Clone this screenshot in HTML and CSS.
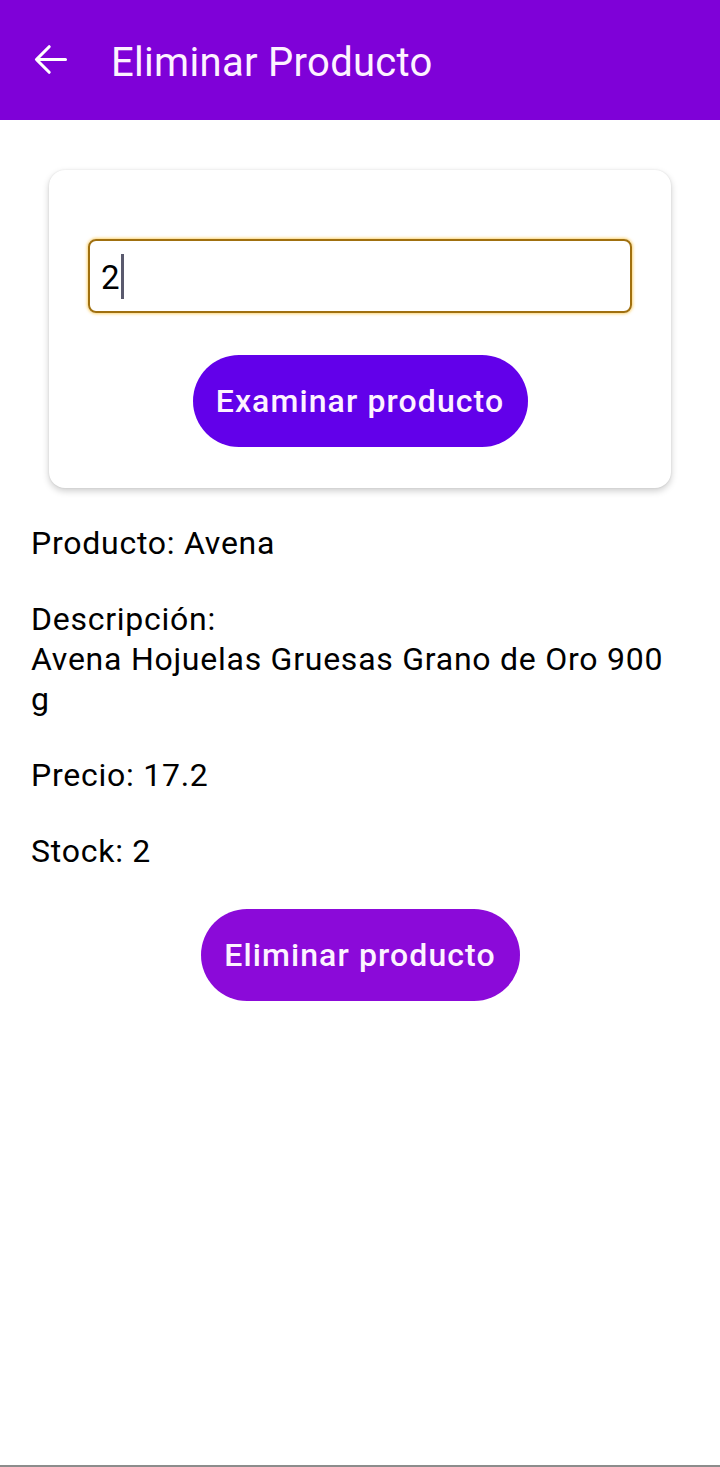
FILE: index.html
```html
<!DOCTYPE html>
<html lang="es">
<head>
<meta charset="utf-8">
<title>Eliminar Producto</title>
<link rel="stylesheet" href="styles.css">
</head>
<body>
<div class="screen">
  <header class="appbar">
    <svg class="back" width="45" height="45" viewBox="0 0 24 24"><path d="M20 12H4.6M11.3 5.2L4.5 12l6.8 6.8" fill="none" stroke="#fff" stroke-width="1.65" stroke-linecap="round" stroke-linejoin="round"/></svg>
    <h1 class="title">Eliminar Producto</h1>
  </header>
  <main class="content">
    <section class="card">
      <div class="field"><span class="value">2</span><span class="caret"></span></div>
      <button class="btn btn-examine">Examinar producto</button>
    </section>
    <div class="info">
      <p class="line">Producto: Avena</p>
      <p class="line">Descripción:<br>Avena Hojuelas Gruesas Grano de Oro 900 g</p>
      <p class="line">Precio: 17.2</p>
      <p class="line">Stock: 2</p>
    </div>
    <div class="actions">
      <button class="btn btn-delete">Eliminar producto</button>
    </div>
  </main>
</div>
</body>
</html>
```
FILE: styles.css
```css
* { box-sizing: border-box; }
html, body { margin: 0; padding: 0; background: #fff; }
body { font-family: Roboto, "Noto Sans", sans-serif; color: #000; }
.screen {
  width: 720px;
  height: 1467px;
  display: flex;
  flex-direction: column;
  border-bottom: 2px solid #8c8c8c;
  overflow: hidden;
}
.appbar {
  height: 120px;
  background: #7f01d8;
  display: flex;
  align-items: center;
  padding-left: 28px;
  flex-shrink: 0;
}
.back { display: block; margin-right: 38px; margin-bottom: 2px; }
.title {
  margin: 4px 0 0 0;
  color: #fdf2ff;
  font-weight: 400;
  font-size: 40px;
  letter-spacing: 0.3px;
}
.content { flex: 1; }
.card {
  margin: 50px 49px 0 49px;
  background: #fff;
  border-radius: 16px;
  box-shadow: 0 3px 7px rgba(0,0,0,0.2), 0 0 2px rgba(0,0,0,0.1);
  padding: 69px 39px 41px 39px;
  display: flex;
  flex-direction: column;
  align-items: center;
}
.field {
  width: 100%;
  height: 74px;
  border: 2px solid #a0700f;
  border-radius: 8px;
  box-shadow: 0 0 3px 1px rgba(250, 196, 70, 0.75);
  display: flex;
  align-items: center;
  padding: 3px 0 0 11px;
  font-size: 33px;
}
.value { line-height: 1; }
.caret {
  width: 3px;
  height: 45px;
  background: #5a5a6e;
  margin: -3px 0 0 1px;
}
.btn {
  border: 0;
  border-radius: 46px;
  color: #fdf2ff;
  font-family: Roboto, "Noto Sans", sans-serif;
  font-weight: 500;
  font-size: 32px;
  letter-spacing: 1.1px;
  height: 92px;
  padding: 0;
}
.btn-examine {
  margin-top: 42px;
  background: #6200ea;
  width: 335px;
}
.btn-delete {
  background: #8b0ad9;
  width: 319px;
}
.info {
  padding: 35px 31px 0 31px;
  display: flex;
  flex-direction: column;
  gap: 36px;
}
.line {
  margin: 0;
  font-size: 32px;
  line-height: 40px;
  letter-spacing: 0.75px;
}
.actions {
  display: flex;
  justify-content: center;
  margin-top: 38px;
}
```
